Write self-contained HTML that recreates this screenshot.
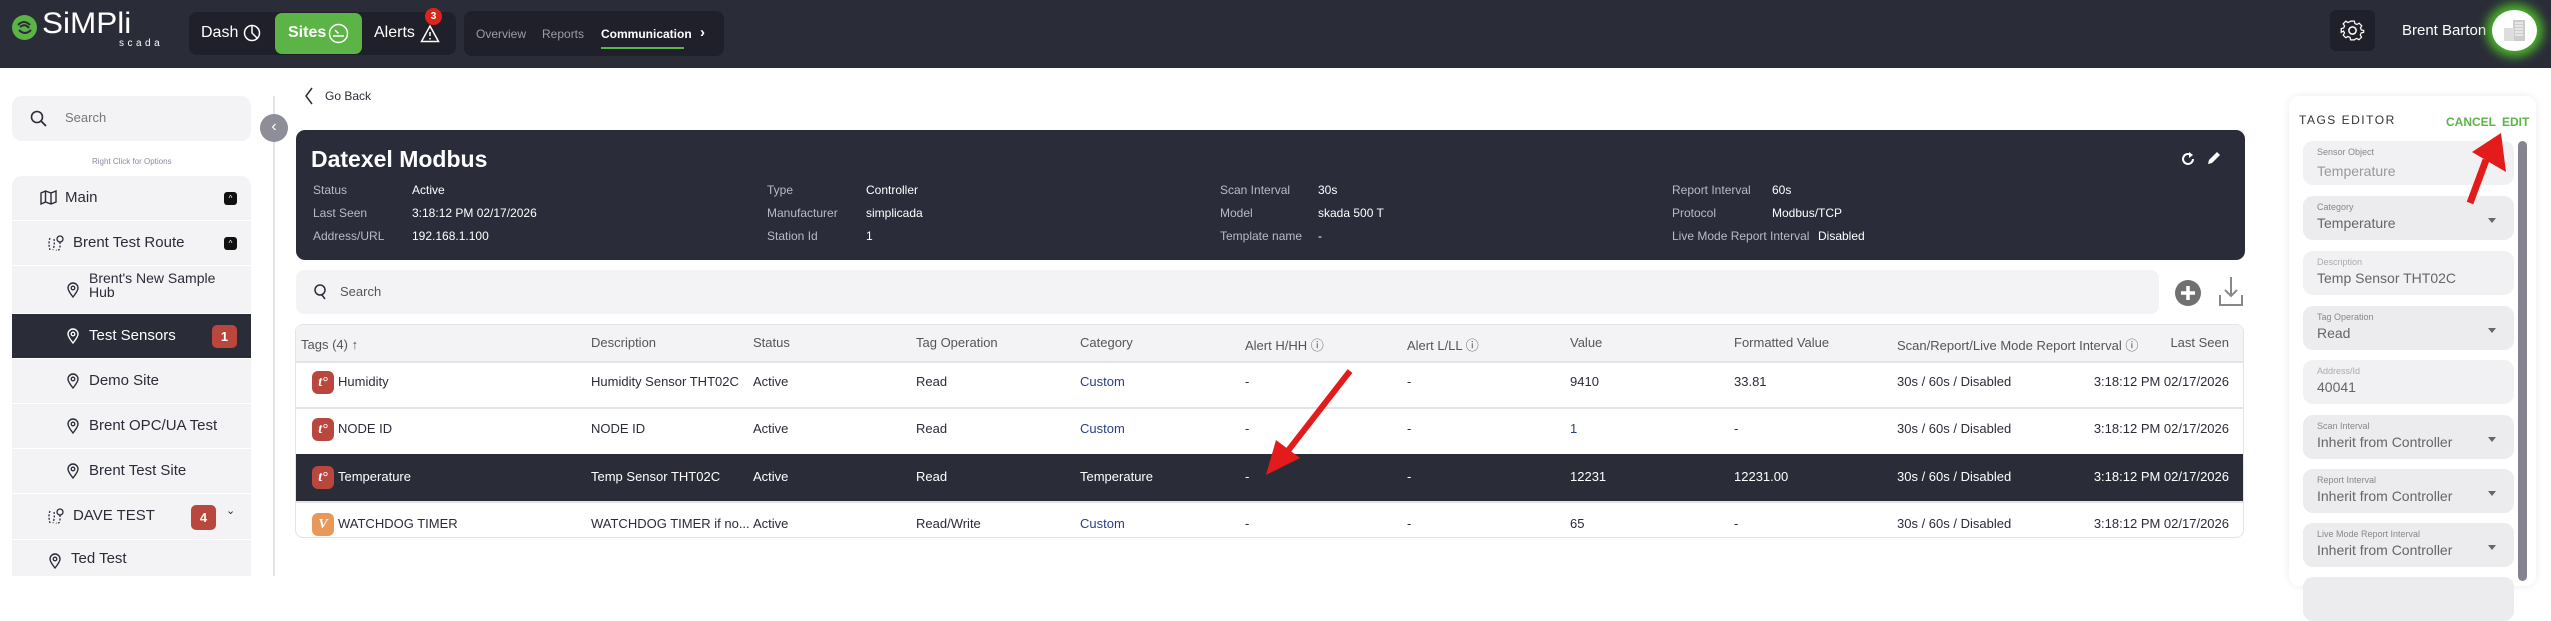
<!DOCTYPE html>
<html><head><meta charset="utf-8"><style>
*{margin:0;padding:0;box-sizing:border-box}
body{width:2551px;height:576px;overflow:hidden;background:#fff;font-family:"Liberation Sans",sans-serif;position:relative;color:#2a2c38}
.a{position:absolute;white-space:nowrap}
.hdr{position:absolute;left:0;top:0;width:2551px;height:68px;background:#2a2c38}
.n{font-family:"Liberation Sans Narrow","Liberation Sans",sans-serif}
.row{position:absolute;left:12px;width:239px;background:#f3f3f5;font-size:15px;color:#2a2c38}
.lbl{color:#b8bac4;font-size:12px}
.val{color:#fff;font-size:12px}
.th{color:#555;font-size:13px}
.td{font-size:13px;color:#2a2c38}
.fld{position:absolute;left:2303px;width:211px;height:44px;background:#ececee;border-radius:10px}
.fl{position:absolute;left:14px;top:6px;font-size:9px;color:#888}
.fv{position:absolute;left:14px;top:19px;font-size:14px;color:#666}
.dd{position:absolute;right:18px;top:22px;width:0;height:0;border-left:4px solid transparent;border-right:4px solid transparent;border-top:5px solid #666}
</style></head><body>
<div class="hdr"></div>
<!-- logo -->
<svg class="a" style="left:11px;top:14px" width="27" height="27" viewBox="0 0 27 27"><circle cx="13.5" cy="13.5" r="12.5" fill="#5cb447"/><path d="M7 11 Q13 5 19 11 M8 16 Q14 22 20 16 M9 13 Q14 9 18 14" stroke="#2a2c38" stroke-width="2" fill="none"/></svg>
<div class="a" style="left:42px;top:9px;font-size:30px;line-height:30px;color:#fff;letter-spacing:0;transform:scaleX(1.05);transform-origin:left">SiMPli</div>
<div class="a" style="left:119px;top:38px;font-size:10px;line-height:11px;color:#fff;letter-spacing:3.5px">scada</div>
<!-- nav group 1 -->
<div class="a" style="left:189px;top:12px;width:267px;height:43px;background:#1f2029;border-radius:8px"></div>
<div class="a" style="left:275px;top:13px;width:87px;height:41px;background:#5cb447;border-radius:7px"></div>
<div class="a n" style="left:201px;top:24px;font-size:16px;color:#fff">Dash</div>
<svg class="a" style="left:243px;top:24px" width="18" height="18"><circle cx="9" cy="9" r="7.5" stroke="#fff" stroke-width="1.5" fill="none"/><path d="M9 1.5 V9 L14 14" stroke="#fff" stroke-width="1.5" fill="none"/></svg>
<div class="a n" style="left:288px;top:24px;font-size:16px;color:#fff;font-weight:bold">Sites</div>
<svg class="a" style="left:328px;top:23px" width="21" height="21"><circle cx="10.5" cy="10.5" r="9" stroke="#fff" stroke-width="1.5" fill="none"/><path d="M10.5 10.5 L7 7 M5 13 H16" stroke="#fff" stroke-width="1.5"/></svg>
<div class="a n" style="left:374px;top:24px;font-size:16px;color:#fff">Alerts</div>
<svg class="a" style="left:420px;top:24px" width="20" height="19"><path d="M10 2 L18.5 17.5 H1.5 Z" stroke="#fff" stroke-width="1.5" fill="none"/><path d="M10 8 V12 M10 14 V15.5" stroke="#fff" stroke-width="1.5"/></svg>
<div class="a" style="left:425px;top:8px;width:17px;height:17px;border-radius:50%;background:#d8261c;color:#fff;font-size:10px;font-weight:bold;text-align:center;line-height:17px">3</div>
<!-- nav group 2 -->
<div class="a" style="left:464px;top:11px;width:260px;height:45px;background:#1f2029;border-radius:8px"></div>
<div class="a n" style="left:476px;top:27px;font-size:12px;color:#9a9ca8">Overview</div>
<div class="a n" style="left:542px;top:27px;font-size:12px;color:#9a9ca8">Reports</div>
<div class="a n" style="left:601px;top:27px;font-size:12px;color:#fff;font-weight:bold">Communication</div>
<div class="a" style="left:601px;top:47px;width:83px;height:2px;background:#5cb447"></div>
<div class="a" style="left:700px;top:24px;font-size:15px;color:#fff;font-weight:bold">›</div>
<!-- right header -->
<div class="a" style="left:2330px;top:10px;width:45px;height:41px;background:#1f2029;border-radius:6px"></div>
<svg class="a" style="left:2340px;top:18px" width="25" height="25" viewBox="0 0 24 24"><path d="M10 2h4l.6 2.6 2.2 1 2.3-1.4 2.8 2.8-1.4 2.3 1 2.2L24 12v0l-.1 2-2.6.6-1 2.2 1.4 2.3-2.8 2.8-2.3-1.4-2.2 1L14 22h-4l-.6-2.6-2.2-1-2.3 1.4-2.8-2.8 1.4-2.3-1-2.2L0 14v-4l2.6-.6 1-2.2L2.1 4.9 4.9 2.1l2.3 1.4 2.2-1z" transform="scale(.9) translate(1.3 1.3)" stroke="#fff" stroke-width="1.3" fill="none"/><circle cx="12" cy="12" r="3.5" stroke="#fff" stroke-width="1.4" fill="none"/></svg>
<div class="a" style="left:2402px;top:22px;font-size:15px;color:#fff">Brent Barton</div>
<div class="a" style="left:2492px;top:10px;width:45px;height:41px;border-radius:50%;background:#fff;box-shadow:0 0 10px 6px #4bb52a"></div>
<svg class="a" style="left:2500px;top:17px" width="30" height="26"><rect x="13" y="3" width="12" height="21" fill="#ccc"/><rect x="4" y="11" width="10" height="13" fill="#ddd"/><path d="M15 6h8M15 9h8M15 12h8M15 15h8M15 18h8" stroke="#fff"/></svg>
<!-- sidebar -->
<div class="a" style="left:12px;top:96px;width:239px;height:45px;background:#f3f3f5;border-radius:10px"></div>
<svg class="a" style="left:30px;top:110px" width="18" height="18"><circle cx="7" cy="7" r="5.5" stroke="#2a2c38" stroke-width="1.6" fill="none"/><path d="M11 11 L16 16" stroke="#2a2c38" stroke-width="1.8"/></svg>
<div class="a" style="left:65px;top:110px;font-size:13px;color:#777">Search</div>
<div class="a" style="left:92px;top:157px;font-size:8px;color:#8a8aa0">Right Click for Options</div>
<div class="a" style="left:12px;top:176px;width:239px;height:400px;background:#f3f3f5;border-radius:10px 10px 0 0"></div>
<div class="row" style="top:176px;height:44px;background:transparent"><svg class="a" style="left:28px;top:14px" width="17" height="15"><path d="M1 3 L5.5 1 L11 3 L16 1 V12 L11 14 L5.5 12 L1 14Z M5.5 1V12 M11 3V14" stroke="#2a2c38" stroke-width="1.4" fill="none"/></svg><span class="a" style="left:53px;top:13px">Main</span><div class="a" style="left:212px;top:16px;width:13px;height:13px;background:#111;border-radius:3px;color:#fff;font-size:8px;text-align:center;line-height:13px">^</div></div>
<div class="a" style="left:12px;top:220px;width:239px;height:1px;background:#fff"></div>
<div class="row" style="top:221px;height:44px;background:transparent"><svg class="a" style="left:35px;top:13px" width="18" height="18"><path d="M3 4 Q1 9 3 16 M7 5 Q8 10 6 16" stroke="#2a2c38" stroke-width="1.3" stroke-dasharray="2 1.5" fill="none"/><circle cx="13" cy="5" r="3" stroke="#2a2c38" stroke-width="1.3" fill="none"/><path d="M13 8 V14 Q12 17 9 16" stroke="#2a2c38" stroke-width="1.3" stroke-dasharray="2 1.5" fill="none"/></svg><span class="a" style="left:61px;top:13px">Brent Test Route</span><div class="a" style="left:212px;top:16px;width:13px;height:13px;background:#111;border-radius:3px;color:#fff;font-size:8px;text-align:center;line-height:13px">^</div></div>
<div class="a" style="left:12px;top:265px;width:239px;height:1px;background:#fff"></div>
<div class="row" style="top:266px;height:47px;background:transparent"><span class="a" style="left:77px;top:5px;font-size:14px;line-height:14px">Brent's New Sample<br>Hub</span></div>
<div class="a" style="left:12px;top:313px;width:239px;height:1px;background:#fff"></div>
<div class="row" style="top:314px;height:44px;background:#2a2c38;color:#fff"><span class="a" style="left:77px;top:13px">Test Sensors</span><div class="a" style="left:200px;top:11px;width:25px;height:23px;background:#b9473d;border-radius:5px;color:#fff;font-size:13px;font-weight:bold;text-align:center;line-height:23px">1</div></div>
<div class="a" style="left:12px;top:358px;width:239px;height:1px;background:#fff"></div>
<div class="row" style="top:359px;height:44px;background:transparent"><span class="a" style="left:77px;top:13px">Demo Site</span></div>
<div class="a" style="left:12px;top:403px;width:239px;height:1px;background:#fff"></div>
<div class="row" style="top:404px;height:44px;background:transparent"><span class="a" style="left:77px;top:13px">Brent OPC/UA Test</span></div>
<div class="a" style="left:12px;top:448px;width:239px;height:1px;background:#fff"></div>
<div class="row" style="top:449px;height:44px;background:transparent"><span class="a" style="left:77px;top:13px">Brent Test Site</span></div>
<div class="a" style="left:12px;top:493px;width:239px;height:1px;background:#fff"></div>
<div class="row" style="top:494px;height:45px;background:transparent"><svg class="a" style="left:35px;top:13px" width="18" height="18"><path d="M3 4 Q1 9 3 16 M7 5 Q8 10 6 16" stroke="#2a2c38" stroke-width="1.3" stroke-dasharray="2 1.5" fill="none"/><circle cx="13" cy="5" r="3" stroke="#2a2c38" stroke-width="1.3" fill="none"/><path d="M13 8 V14 Q12 17 9 16" stroke="#2a2c38" stroke-width="1.3" stroke-dasharray="2 1.5" fill="none"/></svg><span class="a" style="left:61px;top:13px">DAVE TEST</span><div class="a" style="left:179px;top:11px;width:25px;height:25px;background:#b9473d;border-radius:5px;color:#fff;font-size:13px;font-weight:bold;text-align:center;line-height:25px">4</div><span class="a" style="left:214px;top:10px;font-size:11px">⌄</span></div>
<div class="a" style="left:12px;top:539px;width:239px;height:1px;background:#fff"></div>
<div class="row" style="top:540px;height:36px;background:transparent"><span class="a" style="left:59px;top:10px">Ted Test</span></div>
<!-- pins -->
<svg width="0" height="0" style="position:absolute"><defs><symbol id="pin" viewBox="0 0 12 16"><path d="M6 15 C2 10 1 8 1 6 A5 5 0 0 1 11 6 C11 8 10 10 6 15Z" stroke="currentColor" stroke-width="1.4" fill="none"/><circle cx="6" cy="6" r="1.8" stroke="currentColor" stroke-width="1.3" fill="none"/></symbol></defs></svg>
<svg class="a" style="left:67px;top:282px;color:#2a2c38" width="12" height="16"><use href="#pin"/></svg>
<svg class="a" style="left:67px;top:328px;color:#fff" width="12" height="16"><use href="#pin"/></svg>
<svg class="a" style="left:67px;top:373px;color:#2a2c38" width="12" height="16"><use href="#pin"/></svg>
<svg class="a" style="left:67px;top:418px;color:#2a2c38" width="12" height="16"><use href="#pin"/></svg>
<svg class="a" style="left:67px;top:463px;color:#2a2c38" width="12" height="16"><use href="#pin"/></svg>
<svg class="a" style="left:49px;top:553px;color:#2a2c38" width="12" height="16"><use href="#pin"/></svg>
<!-- divider + collapse -->
<div class="a" style="left:273px;top:96px;width:2px;height:480px;background:#e4e4e8"></div>
<div class="a" style="left:260px;top:114px;width:28px;height:28px;border-radius:50%;background:#8e8e98;color:#fff;font-size:16px;text-align:center;line-height:26px">‹</div>
<!-- go back -->
<svg class="a" style="left:304px;top:87px" width="10" height="18"><path d="M8 1 L2 9 L8 17" stroke="#2a2c38" stroke-width="1.5" fill="none"/></svg>
<div class="a n" style="left:325px;top:89px;font-size:12px">Go Back</div>
<!-- card -->
<div class="a" style="left:296px;top:130px;width:1949px;height:130px;background:#2a2c39;border-radius:9px"></div>
<div class="a n" style="left:311px;top:146px;font-size:23px;font-weight:bold;color:#fff">Datexel Modbus</div>
<div class="a n lbl" style="left:313px;top:183px">Status</div><div class="a n val" style="left:412px;top:183px">Active</div>
<div class="a n lbl" style="left:313px;top:206px">Last Seen</div><div class="a n val" style="left:412px;top:206px">3:18:12 PM 02/17/2026</div>
<div class="a n lbl" style="left:313px;top:229px">Address/URL</div><div class="a n val" style="left:412px;top:229px">192.168.1.100</div>
<div class="a n lbl" style="left:767px;top:183px">Type</div><div class="a n val" style="left:866px;top:183px">Controller</div>
<div class="a n lbl" style="left:767px;top:206px">Manufacturer</div><div class="a n val" style="left:866px;top:206px">simplicada</div>
<div class="a n lbl" style="left:767px;top:229px">Station Id</div><div class="a n val" style="left:866px;top:229px">1</div>
<div class="a n lbl" style="left:1220px;top:183px">Scan Interval</div><div class="a n val" style="left:1318px;top:183px">30s</div>
<div class="a n lbl" style="left:1220px;top:206px">Model</div><div class="a n val" style="left:1318px;top:206px">skada 500 T</div>
<div class="a n lbl" style="left:1220px;top:229px">Template name</div><div class="a n val" style="left:1318px;top:229px">-</div>
<div class="a n lbl" style="left:1672px;top:183px">Report Interval</div><div class="a n val" style="left:1772px;top:183px">60s</div>
<div class="a n lbl" style="left:1672px;top:206px">Protocol</div><div class="a n val" style="left:1772px;top:206px">Modbus/TCP</div>
<div class="a n lbl" style="left:1672px;top:229px">Live Mode Report Interval</div><div class="a n val" style="left:1818px;top:229px">Disabled</div>
<svg class="a" style="left:2180px;top:151px" width="16" height="16"><path d="M13 8 A5 5 0 1 1 11 4" stroke="#fff" stroke-width="2" fill="none"/><path d="M9 1 L13 4 L9 7Z" fill="#fff"/></svg>
<svg class="a" style="left:2206px;top:150px" width="16" height="16"><path d="M2 14 L3 10 L11 2 L14 5 L6 13Z" fill="#fff"/></svg>
<!-- search -->
<div class="a" style="left:296px;top:270px;width:1863px;height:44px;background:#f3f3f5;border-radius:8px"></div>
<svg class="a" style="left:313px;top:283px" width="16" height="18"><circle cx="7" cy="7" r="5" stroke="#2a2c38" stroke-width="1.5" fill="none"/><path d="M9 12 L12 16" stroke="#2a2c38" stroke-width="1.5"/></svg>
<div class="a n" style="left:340px;top:284px;font-size:13px;color:#555">Search</div>
<svg class="a" style="left:2174px;top:279px" width="28" height="28"><circle cx="14" cy="14" r="13" fill="#707070"/><path d="M14 7V21M7 14H21" stroke="#fff" stroke-width="3.5"/></svg>
<svg class="a" style="left:2218px;top:275px" width="26" height="32"><path d="M13 2V21 M7 15 L13 21 L19 15 M2 20V30H24V20" stroke="#888" stroke-width="2" fill="none"/></svg>
<!-- table -->
<div class="a" style="left:295px;top:324px;width:1949px;height:214px;border:1.5px solid #e4e4e8;border-radius:8px;background:#fff"></div>
<div class="a" style="left:296px;top:325px;width:1947px;height:36px;background:#f3f3f5;border-radius:8px 8px 0 0"></div>
<div class="a" style="left:296px;top:361px;width:1947px;height:2px;background:#e4e4e8"></div>
<div class="a" style="left:296px;top:407px;width:1947px;height:2px;background:#e4e4e8"></div>
<div class="a" style="left:296px;top:454px;width:1947px;height:47px;background:#2a2c38"></div>
<div class="a" style="left:296px;top:501px;width:1947px;height:2px;background:#e4e4e8"></div>
<div class="a n th" style="left:301px;top:337px">Tags (4) <b>↑</b></div>
<div class="a n th" style="left:591px;top:335px">Description</div>
<div class="a n th" style="left:753px;top:335px">Status</div>
<div class="a n th" style="left:916px;top:335px">Tag Operation</div>
<div class="a n th" style="left:1080px;top:335px">Category</div>
<div class="a n th" style="left:1245px;top:335px">Alert H/HH ⓘ</div>
<div class="a n th" style="left:1407px;top:335px">Alert L/LL ⓘ</div>
<div class="a n th" style="left:1570px;top:335px">Value</div>
<div class="a n th" style="left:1734px;top:335px">Formatted Value</div>
<div class="a n th" style="left:1897px;top:335px">Scan/Report/Live Mode Report Interval ⓘ</div>
<div class="a n th" style="left:2140px;top:335px;width:89px;text-align:right">Last Seen</div>
<!-- rows -->
<div class="a" style="left:0;top:374px;width:2551px;height:20px">
<div class="a" style="left:312px;top:-3px;width:22px;height:23px;background:#b9473d;border-radius:6px;color:#fff;font:italic bold 14px 'Liberation Serif',serif;text-align:center;line-height:23px">t°</div>
<div class="a n td" style="left:338px;top:0">Humidity</div><div class="a n td" style="left:591px">Humidity Sensor THT02C</div><div class="a n td" style="left:753px">Active</div><div class="a n td" style="left:916px">Read</div><div class="a n td" style="left:1080px;color:#2b3f86">Custom</div><div class="a n td" style="left:1245px">-</div><div class="a n td" style="left:1407px">-</div><div class="a n td" style="left:1570px">9410</div><div class="a n td" style="left:1734px">33.81</div><div class="a n td" style="left:1897px">30s / 60s / Disabled</div><div class="a n td" style="left:2090px;width:139px;text-align:right">3:18:12 PM 02/17/2026</div></div>
<div class="a" style="left:0;top:421px;width:2551px;height:20px">
<div class="a" style="left:312px;top:-3px;width:22px;height:23px;background:#b9473d;border-radius:6px;color:#fff;font:italic bold 14px 'Liberation Serif',serif;text-align:center;line-height:23px">t°</div>
<div class="a n td" style="left:338px">NODE ID</div><div class="a n td" style="left:591px">NODE ID</div><div class="a n td" style="left:753px">Active</div><div class="a n td" style="left:916px">Read</div><div class="a n td" style="left:1080px;color:#2b3f86">Custom</div><div class="a n td" style="left:1245px">-</div><div class="a n td" style="left:1407px">-</div><div class="a n td" style="left:1570px;color:#2b3f86">1</div><div class="a n td" style="left:1734px">-</div><div class="a n td" style="left:1897px">30s / 60s / Disabled</div><div class="a n td" style="left:2090px;width:139px;text-align:right">3:18:12 PM 02/17/2026</div></div>
<div class="a" style="left:0;top:469px;width:2551px;height:20px">
<div class="a" style="left:312px;top:-3px;width:22px;height:23px;background:#b9473d;border-radius:6px;color:#fff;font:italic bold 14px 'Liberation Serif',serif;text-align:center;line-height:23px">t°</div>
<div class="a n td" style="left:338px;color:#fff">Temperature</div><div class="a n td" style="left:591px;color:#fff">Temp Sensor THT02C</div><div class="a n td" style="left:753px;color:#fff">Active</div><div class="a n td" style="left:916px;color:#fff">Read</div><div class="a n td" style="left:1080px;color:#fff">Temperature</div><div class="a n td" style="left:1245px;color:#fff">-</div><div class="a n td" style="left:1407px;color:#fff">-</div><div class="a n td" style="left:1570px;color:#fff">12231</div><div class="a n td" style="left:1734px;color:#fff">12231.00</div><div class="a n td" style="left:1897px;color:#fff">30s / 60s / Disabled</div><div class="a n td" style="left:2090px;width:139px;text-align:right;color:#fff">3:18:12 PM 02/17/2026</div></div>
<div class="a" style="left:0;top:516px;width:2551px;height:20px">
<div class="a" style="left:312px;top:-3px;width:22px;height:23px;background:#e8995a;border-radius:6px;color:#fff;font:italic bold 14px 'Liberation Serif',serif;text-align:center;line-height:23px">V</div>
<div class="a n td" style="left:338px">WATCHDOG TIMER</div><div class="a n td" style="left:591px">WATCHDOG TIMER if no...</div><div class="a n td" style="left:753px">Active</div><div class="a n td" style="left:916px">Read/Write</div><div class="a n td" style="left:1080px;color:#2b3f86">Custom</div><div class="a n td" style="left:1245px">-</div><div class="a n td" style="left:1407px">-</div><div class="a n td" style="left:1570px">65</div><div class="a n td" style="left:1734px">-</div><div class="a n td" style="left:1897px">30s / 60s / Disabled</div><div class="a n td" style="left:2090px;width:139px;text-align:right">3:18:12 PM 02/17/2026</div></div>
<!-- right panel -->
<div class="a" style="left:2289px;top:96px;width:247px;height:490px;background:#fff;border-radius:10px;box-shadow:0 0 8px rgba(0,0,0,.08)"></div>
<div class="a" style="left:2299px;top:113px;font-size:12px;letter-spacing:1.5px;color:#333">TAGS EDITOR</div>
<div class="a n" style="left:2446px;top:115px;font-size:12px;color:#5cb447;font-weight:bold">CANCEL</div>
<div class="a n" style="left:2502px;top:115px;font-size:12px;color:#5cb447;font-weight:bold">EDIT</div>
<div class="a" style="left:2518px;top:141px;width:9px;height:440px;background:#868390;border-radius:5px"></div>
<div class="fld" style="top:141px;background:#f1f1f3"><span class="fl">Sensor Object</span><span class="fv" style="top:22px;color:#999">Temperature</span></div>
<div class="fld" style="top:196px"><span class="fl">Category</span><span class="fv">Temperature</span><i class="dd"></i></div>
<div class="fld" style="top:251px;background:#f1f1f3"><span class="fl" style="color:#aaa">Description</span><span class="fv">Temp Sensor THT02C</span></div>
<div class="fld" style="top:306px"><span class="fl">Tag Operation</span><span class="fv">Read</span><i class="dd"></i></div>
<div class="fld" style="top:360px;background:#f1f1f3"><span class="fl" style="color:#aaa">Address/Id</span><span class="fv">40041</span></div>
<div class="fld" style="top:415px"><span class="fl">Scan Interval</span><span class="fv">Inherit from Controller</span><i class="dd"></i></div>
<div class="fld" style="top:469px"><span class="fl">Report Interval</span><span class="fv">Inherit from Controller</span><i class="dd"></i></div>
<div class="fld" style="top:523px"><span class="fl">Live Mode Report Interval</span><span class="fv">Inherit from Controller</span><i class="dd"></i></div>
<div class="fld" style="top:577px"></div>
<!-- red arrows -->
<svg class="a" style="left:0;top:0" width="2551" height="576"><g fill="#e41b1b"><path d="M2470 203 L2486 160" stroke="#e41b1b" stroke-width="7"/><path d="M2501 133 L2506 172 L2472 152Z"/><path d="M1350 371 L1287 452" stroke="#e41b1b" stroke-width="6"/><path d="M1266 475 L1276 440 L1300 458Z"/></g></svg>
</body></html>
